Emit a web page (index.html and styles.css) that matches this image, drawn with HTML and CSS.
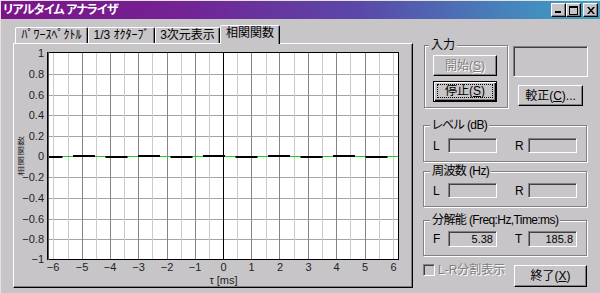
FILE: index.html
```html
<!doctype html>
<html>
<head>
<title>リアルタイム アナライザ</title>
<meta charset="utf-8" />
<link rel="stylesheet" href="styles.css">
</head>

<body>
<div class="window">
	<div class="titlebar">
		<span class="title">リアルタイム アナライザ</span>
		<div class="caption-btns">
			<span class="cap-btn"><svg width="9" height="8" viewBox="0 0 9 8"><rect x="1" y="5" width="6" height="2" fill="#000"/></svg></span>
			<span class="cap-btn"><svg width="9" height="9" viewBox="0 0 9 9"><rect x="0.5" y="0.5" width="8" height="8" fill="none" stroke="#000"/><rect x="0" y="0" width="9" height="2" fill="#000"/></svg></span>
			<span class="cap-btn close"><svg width="8" height="7" viewBox="0 0 8 7"><path d="M0 0h2l2 2.5 2-2.5h2l-3 3.5 3 3.5h-2l-2-2.5-2 2.5h-2l3-3.5z" fill="#000"/></svg></span>
		</div>
	</div>

	<div class="client">
		<div class="tabs-col">
			<div class="tabs">
				<div class="tab t1">ﾊﾟﾜｰｽﾍﾟｸﾄﾙ</div>
				<div class="tab t2">1/3 ｵｸﾀｰﾌﾞ</div>
				<div class="tab t3">3次元表示</div>
				<div class="tab t4 active">相関関数</div>
			</div>
			<div class="panel">
				<svg class="chart" width="396" height="241" viewBox="15 45 396 241">
					<rect x="47" y="52" width="352" height="208" fill="#fff"/>
					<g stroke="#a4a4a4" stroke-width="1">
						<line x1="47" y1="74.5" x2="399" y2="74.5"/>
						<line x1="47" y1="95.5" x2="399" y2="95.5"/>
						<line x1="47" y1="115.5" x2="399" y2="115.5"/>
						<line x1="47" y1="136.5" x2="399" y2="136.5"/>
						<line x1="47" y1="177.5" x2="399" y2="177.5"/>
						<line x1="47" y1="198.5" x2="399" y2="198.5"/>
						<line x1="47" y1="219.5" x2="399" y2="219.5"/>
						<line x1="47" y1="239.5" x2="399" y2="239.5"/>
					</g>
					<g stroke="#cbcbcb" stroke-width="1">
						<line x1="53.5" y1="52" x2="53.5" y2="260"/>
						<line x1="68.5" y1="52" x2="68.5" y2="260"/>
						<line x1="96.5" y1="52" x2="96.5" y2="260"/>
						<line x1="124.5" y1="52" x2="124.5" y2="260"/>
						<line x1="152.5" y1="52" x2="152.5" y2="260"/>
						<line x1="181.5" y1="52" x2="181.5" y2="260"/>
						<line x1="209.5" y1="52" x2="209.5" y2="260"/>
						<line x1="237.5" y1="52" x2="237.5" y2="260"/>
						<line x1="266.5" y1="52" x2="266.5" y2="260"/>
						<line x1="294.5" y1="52" x2="294.5" y2="260"/>
						<line x1="322.5" y1="52" x2="322.5" y2="260"/>
						<line x1="350.5" y1="52" x2="350.5" y2="260"/>
						<line x1="379.5" y1="52" x2="379.5" y2="260"/>
						<line x1="393.5" y1="52" x2="393.5" y2="260"/>
					</g>
					<g stroke="#858585" stroke-width="1">
						<line x1="82.5" y1="52" x2="82.5" y2="260"/>
						<line x1="110.5" y1="52" x2="110.5" y2="260"/>
						<line x1="138.5" y1="52" x2="138.5" y2="260"/>
						<line x1="167.5" y1="52" x2="167.5" y2="260"/>
						<line x1="195.5" y1="52" x2="195.5" y2="260"/>
						<line x1="251.5" y1="52" x2="251.5" y2="260"/>
						<line x1="279.5" y1="52" x2="279.5" y2="260"/>
						<line x1="308.5" y1="52" x2="308.5" y2="260"/>
						<line x1="336.5" y1="52" x2="336.5" y2="260"/>
						<line x1="365.5" y1="52" x2="365.5" y2="260"/>
					</g>
					<line x1="223.5" y1="52" x2="223.5" y2="260" stroke="#000"/>

					<!-- data -->
					<rect x="47" y="156" width="352" height="1" fill="#1ad01a"/>
					<g fill="#000">
						<rect x="47" y="156" width="15.5" height="2"/>
						<rect x="73" y="155" width="22" height="2"/>
						<rect x="105.5" y="156" width="22" height="2"/>
						<rect x="138" y="155" width="22" height="2"/>
						<rect x="170.5" y="156" width="22" height="2"/>
						<rect x="203" y="155" width="22" height="2"/>
						<rect x="235.5" y="156" width="22" height="2"/>
						<rect x="268" y="155" width="22" height="2"/>
						<rect x="300.5" y="156" width="22" height="2"/>
						<rect x="333" y="155" width="22" height="2"/>
						<rect x="365.5" y="156" width="22" height="2"/>
						<rect x="398" y="155" width="1" height="2"/>
					</g>

					<rect x="47.5" y="52.5" width="351" height="207" fill="none" stroke="#000"/>
					<line x1="48.5" y1="52" x2="48.5" y2="260" stroke="#555"/>

					<g class="ylabels">
						<text x="44" y="53">1</text>
						<text x="44" y="74">0.8</text>
						<text x="44" y="95">0.6</text>
						<text x="44" y="115">0.4</text>
						<text x="44" y="136">0.2</text>
						<text x="44" y="156">0</text>
						<text x="44" y="177">−0.2</text>
						<text x="44" y="198">−0.4</text>
						<text x="44" y="219">−0.6</text>
						<text x="44" y="239">−0.8</text>
						<text x="44" y="259">−1</text>
					</g>
					<g class="xlabels">
						<text x="53" y="267">−6</text>
						<text x="82" y="267">−5</text>
						<text x="110" y="267">−4</text>
						<text x="138.5" y="267">−3</text>
						<text x="167" y="267">−2</text>
						<text x="195" y="267">−1</text>
						<text x="223.5" y="267">0</text>
						<text x="251.5" y="267">1</text>
						<text x="280" y="267">2</text>
						<text x="308.5" y="267">3</text>
						<text x="336.5" y="267">4</text>
						<text x="365" y="267">5</text>
						<text x="393.5" y="267">6</text>
						<text x="223.5" y="280">τ [ms]</text>
					</g>
					<text class="ytitle" transform="translate(20 156) rotate(-90) scale(1 0.62)">相関関数</text>
				</svg>
			</div>
		</div>

		<div class="side">
			<div class="top-row">
				<fieldset class="group input-grp">
					<legend>入力</legend>
					<div class="btn start disabled">開始(<u>S</u>)</div>
					<div class="btn stop default"><span class="focus">停止(<u>S</u>)</span></div>
				</fieldset>
				<div class="top-right">
					<div class="sunken blank"></div>
					<div class="btn cal">較正(<u>C</u>)...</div>
				</div>
			</div>

			<fieldset class="group level">
				<legend>レベル (dB)</legend>
				<div class="lr-row">
					<span class="lbl-l">L</span><span class="sunken field"></span>
					<span class="lbl-r">R</span><span class="sunken field"></span>
				</div>
			</fieldset>

			<fieldset class="group freq">
				<legend>周波数 (Hz)</legend>
				<div class="lr-row">
					<span class="lbl-l">L</span><span class="sunken field"></span>
					<span class="lbl-r">R</span><span class="sunken field"></span>
				</div>
			</fieldset>

			<fieldset class="group reso">
				<legend>分解能 (Freq:Hz,Time:ms)</legend>
				<div class="lr-row">
					<span class="lbl-l">F</span><span class="sunken field val">5.38</span>
					<span class="lbl-r">T</span><span class="sunken field val">185.8</span>
				</div>
			</fieldset>

			<div class="bottom-row">
				<div class="check-wrap">
					<span class="sunken check"></span>
					<span class="disabled">L-R分割表示</span>
				</div>
				<div class="btn quit">終了(<u>X</u>)</div>
			</div>
		</div>
	</div>
</div>
</body>
</html>
```

FILE: styles.css
```css
* { box-sizing: border-box; }
body { margin: 0; background: #c8c5c8; font: 12px/14px "Liberation Sans", "Noto Sans CJK JP", sans-serif; font-feature-settings: "palt"; color: #000; }

.window { width: 600px; height: 293px; background: #c8c5c8; border-top: 1px solid #e4e2e4; border-left: 1px solid #e4e2e4; overflow: hidden; }

.titlebar { height: 18px; display: flex; align-items: center; padding: 0 2px 0 2px; background: linear-gradient(to right, #7c1488 0%, #742294 30%, #5a48a8 60%, #4684bc 85%, #3ca2c6 100%); }
.title { color: #fff; font-weight: bold; letter-spacing: -0.8px; }
.caption-btns { margin-left: auto; display: flex; }
.cap-btn { width: 15px; height: 14px; display: flex; align-items: center; justify-content: center; background: #c8c5c8; border: 1px solid; border-color: #fff #000 #000 #fff; box-shadow: inset -1px -1px #808080; }
.cap-btn.close { margin-left: 2px; }

.client { display: flex; align-items: flex-start; }

/* tabs + chart */
.tabs-col { margin: 6px 0 0 12px; width: 400px; }
.tabs { display: flex; align-items: flex-end; height: 18px; padding-left: 2px; position: relative; z-index: 1; }
.tab { height: 16px; border: 1px solid; border-bottom: none; border-color: #fff #000 transparent #fff; border-radius: 2px 2px 0 0; box-shadow: inset -1px 0 #808080; text-align: center; line-height: 15px; white-space: nowrap; }
.t1 { width: 73px; }
.t2 { width: 67px; }
.t3 { width: 65px; }
.t4 { width: 60px; }
.tab.active { height: 19px; margin-bottom: -1px; background: #c8c5c8; }
.panel { height: 245px; padding: 1px; border: 1px solid; border-color: #fff #000 #000 #fff; box-shadow: inset -1px -1px #808080; }
.chart { display: block; }
.chart text { font-family: "Liberation Sans", sans-serif; font-size: 11px; fill: #1e1e1e; dominant-baseline: central; }
.ylabels text { text-anchor: end; }
.xlabels text { text-anchor: middle; }
.chart .ytitle { font-family: "Noto Sans CJK JP", sans-serif; font-size: 10px; text-anchor: middle; }

/* right side */
.side { margin: 19px 0 0 10px; width: 165px; }
.group { margin: 0; padding: 0; border: 1px solid #808080; box-shadow: inset 1px 1px #fff, 1px 1px #fff; }
.group legend { margin-left: 6px; padding: 0 2px; line-height: 14px; letter-spacing: -0.6px; background: #c8c5c8; }

.top-row { display: flex; height: 70px; }
.input-grp { margin-left: 1px; width: 84px; height: 70px; }
.input-grp legend { margin-left: 4px; letter-spacing: 0; }
.top-right { margin-left: 5px; width: 75px; }
.blank { margin-top: 8px; height: 31px; }

.btn { display: flex; align-items: center; justify-content: center; border: 1px solid; border-color: #fff #000 #000 #fff; box-shadow: inset -1px -1px #808080; white-space: nowrap; }
.btn.default { border: 1px solid #000; box-shadow: inset 1px 1px #fff, inset -1px -1px #000, inset -2px -2px #808080; }
.start { margin: 3px 0 0 8px; width: 64px; height: 21px; }
.stop { margin: 5px 0 0 8px; width: 64px; height: 21px; }
.focus { flex: 1; align-self: stretch; margin: 2px 3px 3px 3px; border: 1px dotted #000; display: flex; align-items: center; justify-content: center; }
.cal { margin: 8px 0 0 5px; width: 65px; height: 21px; }
.disabled { color: #808080; text-shadow: 1px 1px #fff; }

.sunken { display: block; border: 1px solid; border-color: #808080 #fff #fff #808080; box-shadow: inset 1px 1px #404040; }

.level { margin-top: 10px; width: 164px; height: 44px; }
.freq { margin-top: 2px; width: 164px; height: 43px; }
.reso { margin-top: 6px; width: 164px; height: 43px; }
.lr-row { display: flex; align-items: center; }
.level .lr-row { margin-top: 6px; }
.freq .lr-row { margin-top: 5px; }
.reso .lr-row { margin-top: 4px; }
.lbl-l { width: 24px; padding-left: 9px; }
.lbl-r { width: 31px; padding-left: 18px; }
.field { width: 49px; height: 15px; }
.reso .field { height: 16px; }
.val { font-size: 11px; line-height: 14px; text-align: right; padding-right: 3px; }

.bottom-row { display: flex; align-items: flex-start; margin-top: 8px; }
.check-wrap { display: flex; align-items: center; gap: 3px; height: 12px; }
.check { width: 12px; height: 12px; }
.quit { margin: 1px 1px 0 auto; width: 73px; height: 22px; }
```
